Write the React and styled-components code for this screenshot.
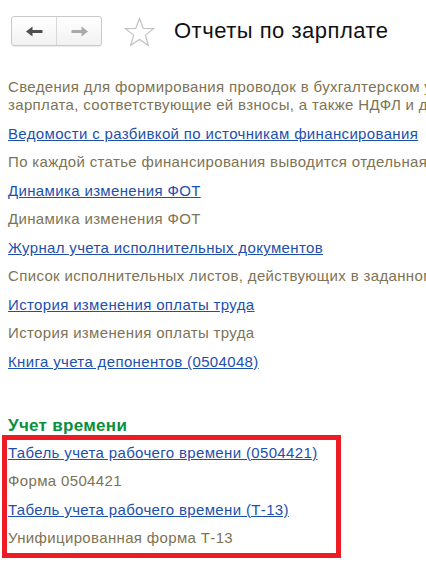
import React from 'react';
import styled, { createGlobalStyle } from 'styled-components';

const GlobalStyle = createGlobalStyle`
  body {
    margin: 0;
    background: #fff;
    font-family: "Liberation Sans", Arial, sans-serif;
    overflow: hidden;
  }
`;

const Page = styled.div`
  width: 426px;
  height: 564px;
  overflow: hidden;
`;

const Header = styled.div`
  display: flex;
  align-items: center;
  padding: 15px 0 0 11px;
  height: 32px;
`;

const NavGroup = styled.div`
  display: flex;
  width: 91px;
  height: 30px;
  box-sizing: border-box;
  border: 1px solid #c9c9c9;
  border-radius: 3px;
  background: linear-gradient(#ffffff, #f1f1f1);
  box-shadow: 0 1px 1px rgba(0, 0, 0, 0.08);
`;

const NavButton = styled.div`
  flex: 1;
  display: flex;
  align-items: center;
  justify-content: center;
  & + & {
    border-left: 1px solid #d8d8d8;
  }
`;

const StarBox = styled.div`
  margin-left: 22px;
  width: 31px;
  height: 31px;
  margin-top: 3px;
`;

const Title = styled.h1`
  margin: 0 0 0 19px;
  font-size: 22px;
  letter-spacing: 0.5px;
  font-weight: normal;
  color: #111;
`;

const Content = styled.div`
  padding: 31px 0 0 8px;
  font-size: 15px;
  letter-spacing: 0.35px;
  line-height: 18px;
  white-space: nowrap;
`;

const Desc = styled.div`
  color: #7d7355;
  margin-top: ${p => (p.first ? 0 : 10)}px;
`;

const Link = styled.a`
  display: block;
  width: fit-content;
  color: #1d4fae;
  text-decoration: underline;
  margin-top: 11px;
  cursor: pointer;
`;

const Section = styled.div`
  margin-top: 46px;
  font-size: 17px;
  letter-spacing: 0.3px;
  font-weight: bold;
  color: #0a8f3d;
  line-height: 18px;
`;

const Highlight = styled.div`
  margin-left: -6px;
  width: 339px;
  box-sizing: border-box;
  border: 5px solid #ed1c24;
  padding: 4px 0 6px 1px;
  & > a:first-child {
    margin-top: 0;
  }
`;

const Arrow = ({ dir, color }) => (
  <svg width="17" height="11" viewBox="0 0 17 11">
    <path
      d="M0 5.5 L6.5 0.5 L6.5 4 L16.5 4 L16.5 7 L6.5 7 L6.5 10.5 Z"
      fill={color}
      transform={dir === 'right' ? 'translate(17 0) scale(-1 1)' : undefined}
    />
  </svg>
);

const Star = () => (
  <svg width="31" height="31" viewBox="0 0 31 31">
    <path
      d="M15.5 1.5 L19.2 11.3 L29.6 11.6 L21.4 18.1 L24.3 28.3 L15.5 22.4 L6.7 28.3 L9.6 18.1 L1.4 11.6 L11.8 11.3 Z"
      fill="none"
      stroke="#c2c2c2"
      strokeWidth="1.2"
      strokeLinejoin="miter"
    />
  </svg>
);

const reports = [
  {
    title: 'Ведомости с разбивкой по источникам финансирования',
    desc: 'По каждой статье финансирования выводится отдельная ведомость',
  },
  { title: 'Динамика изменения ФОТ', desc: 'Динамика изменения ФОТ' },
  {
    title: 'Журнал учета исполнительных документов',
    desc: 'Список исполнительных листов, действующих в заданном периоде',
  },
  { title: 'История изменения оплаты труда', desc: 'История изменения оплаты труда' },
  { title: 'Книга учета депонентов (0504048)' },
];

const timeReports = [
  { title: 'Табель учета рабочего времени (0504421)', desc: 'Форма 0504421' },
  { title: 'Табель учета рабочего времени (Т-13)', desc: 'Унифицированная форма Т-13' },
];

const App = () => {
  return (
    <Page>
      <GlobalStyle />
      <Header>
        <NavGroup>
          <NavButton>
            <Arrow dir="left" color="#4f4f4f" />
          </NavButton>
          <NavButton>
            <Arrow dir="right" color="#a9a9a9" />
          </NavButton>
        </NavGroup>
        <StarBox>
          <Star />
        </StarBox>
        <Title>Отчеты по зарплате</Title>
      </Header>
      <Content>
        <Desc first>
          Сведения для формирования проводок в бухгалтерском учете, в которых отражается
          <br />
          зарплата, соответствующие ей взносы, а также НДФЛ и другие удержания
        </Desc>
        {reports.map(r => (
          <React.Fragment key={r.title}>
            <Link>{r.title}</Link>
            {r.desc && <Desc>{r.desc}</Desc>}
          </React.Fragment>
        ))}
        <Section>Учет времени</Section>
        <Highlight>
          {timeReports.map(r => (
            <React.Fragment key={r.title}>
              <Link>{r.title}</Link>
              <Desc>{r.desc}</Desc>
            </React.Fragment>
          ))}
        </Highlight>
      </Content>
    </Page>
  );
};

export default App;
